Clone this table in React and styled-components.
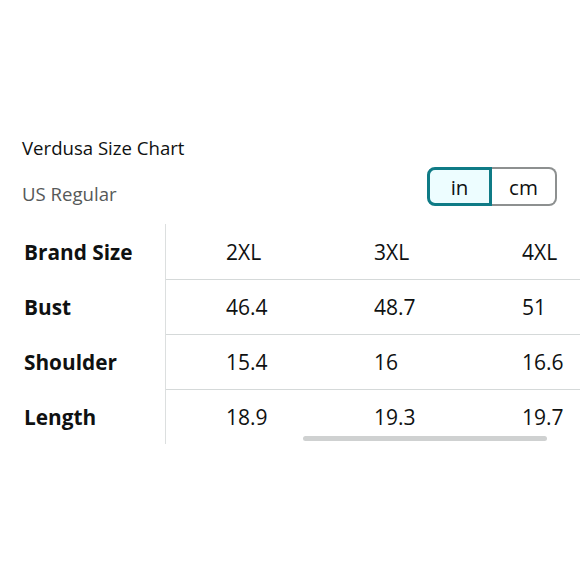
import React from 'react';
import styled, { createGlobalStyle } from 'styled-components';

const GlobalStyle = createGlobalStyle`
  body {
    margin: 0;
    background: #fff;
    font-family: "Open Sans", "Noto Sans", Arial, sans-serif;
    color: #0f1111;
  }
`;

const Page = styled.div`
  width: 580px;
  height: 580px;
  box-sizing: border-box;
  padding-top: 135px;
  overflow: hidden;
`;

const Header = styled.div`
  display: flex;
  justify-content: space-between;
  align-items: flex-end;
  padding: 0 22px 0 22px;
`;

const Titles = styled.div`
  display: flex;
  flex-direction: column;
`;

const Title = styled.div`
  font-size: 18.6px;
  line-height: 26px;
  color: #0f1111;
`;

const Subtitle = styled.div`
  margin-top: 20px;
  font-size: 18.6px;
  line-height: 26px;
  color: #565959;
`;

const Toggle = styled.div`
  display: flex;
  margin-right: 1px;
  margin-bottom: 1px;
`;

const UnitButton = styled.div`
  width: 65px;
  height: 39px;
  box-sizing: border-box;
  display: flex;
  align-items: center;
  justify-content: center;
  font-size: 20.5px;
  color: #0f1111;
  border: ${p => (p.$active ? '3px solid #0f7b86' : '2px solid #8d9090')};
  background: ${p => (p.$active ? '#edfdff' : '#fff')};
  border-radius: ${p => (p.$left ? '8px 0 0 8px' : '0 8px 8px 0')};
  ${p => !p.$left && 'border-left: 0;'}
`;

const TableWrap = styled.div`
  position: relative;
  margin-top: 17px;
  display: flex;
`;

const LabelCol = styled.div`
  width: 165px;
  flex-shrink: 0;
  border-right: 1px solid #dcdfdf;
`;

const LabelCell = styled.div`
  height: 55px;
  box-sizing: border-box;
  display: flex;
  align-items: center;
  padding-left: 24px;
  font-size: 20.8px;
  font-weight: 700;
  color: #0f1111;
`;

const Values = styled.div`
  flex: 1;
  overflow: hidden;
`;

const Row = styled.div`
  display: flex;
  height: 55px;
  box-sizing: border-box;
  border-top: ${p => (p.$first ? 'none' : '1px solid #d5d9d9')};
`;

const Cell = styled.div`
  width: 148px;
  flex-shrink: 0;
  display: flex;
  align-items: center;
  padding-left: 60px;
  box-sizing: border-box;
  font-size: 21px;
  color: #0f1111;
`;

const ScrollThumb = styled.div`
  position: absolute;
  left: 303px;
  top: 212px;
  width: 244px;
  height: 5px;
  border-radius: 3px;
  background: #cfd1d1;
`;

const rows = [
  { label: 'Brand Size', values: ['2XL', '3XL', '4XL'] },
  { label: 'Bust', values: ['46.4', '48.7', '51'] },
  { label: 'Shoulder', values: ['15.4', '16', '16.6'] },
  { label: 'Length', values: ['18.9', '19.3', '19.7'] },
];

export default function App() {
  return (
    <Page>
      <GlobalStyle />
      <Header>
        <Titles>
          <Title>Verdusa Size Chart</Title>
          <Subtitle>US Regular</Subtitle>
        </Titles>
        <Toggle>
          <UnitButton $active $left>in</UnitButton>
          <UnitButton>cm</UnitButton>
        </Toggle>
      </Header>
      <TableWrap>
        <LabelCol>
          {rows.map(r => (
            <LabelCell key={r.label}>{r.label}</LabelCell>
          ))}
        </LabelCol>
        <Values>
          {rows.map((r, i) => (
            <Row key={r.label} $first={i === 0}>
              {r.values.map(v => (
                <Cell key={v}>{v}</Cell>
              ))}
            </Row>
          ))}
        </Values>
        <ScrollThumb />
      </TableWrap>
    </Page>
  );
}
